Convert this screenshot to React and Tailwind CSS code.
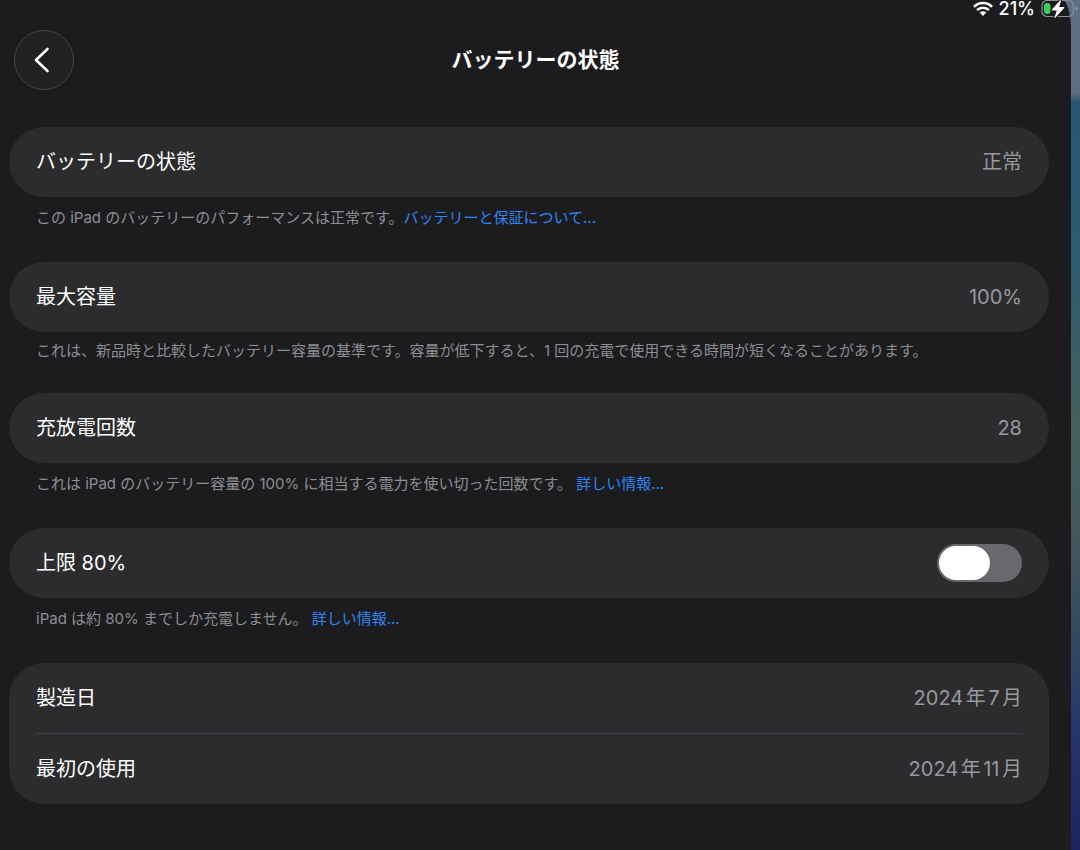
import React, { useState } from "react";

const WifiIcon = () => (
  <svg viewBox="0 0 20 16" className="h-4 w-5" aria-hidden="true">
    <g fill="none" stroke="white" strokeWidth="2.6">
      <path d="M1 5.8a12.6 12.6 0 0 1 18 0" />
      <path d="M4.1 9.2a8.2 8.2 0 0 1 11.800 0" />
    </g>
    <path d="M6.8 11.6a4.5 4.5 0 0 1 6.400 0L10 15z" fill="white" />
  </svg>
);

const BatteryIcon = () => (
  <svg viewBox="0 0 38 20" className="h-5 w-[38px]" aria-hidden="true">
    <rect x="1" y="1.5" width="31.5" height="16" rx="5" fill="none" stroke="#8b9097" strokeWidth="1.2" />
    <path d="M34.5 7v5c1.4-.4 2.2-1.3 2.2-2.5S35.900 7.400 34.500 7z" fill="#8b9097" />
    <rect x="3" y="4" width="6.500" height="11" rx="3" fill="#35d058" />
    <path
      d="M19.500 1.500L11 11h5.500l-2.500 7.500L23 8.500h-5.500z"
      fill="white"
      stroke="#1c1c1e"
      strokeWidth="3"
      strokeLinejoin="round"
      paintOrder="stroke"
    />
    <path
      d="M19.500 1.500L11 11h5.500l-2.500 7.500L23 8.500h-5.500z"
      fill="white"
      stroke="white"
      strokeWidth="1"
      strokeLinejoin="round"
    />
  </svg>
);

const Card = ({ children }) => (
  <div className="rounded-[35px] bg-[#2c2c2e] px-[27px]">{children}</div>
);

const Row = ({ label, value }) => (
  <div className="flex h-[70px] items-center justify-between text-xl">
    <span>{label}</span>
    <span className="text-[#98989f]">{value}</span>
  </div>
);

const Note = ({ children, link }) => (
  <p className="px-[27px] pt-[9px] pb-8 text-[15px] leading-6 text-[#8d8d93]">
    {children}
    {link && (
      <a href="#" className="text-[#2b86f5]">
        {link}
      </a>
    )}
  </p>
);

export default function App() {
  const [limit, setLimit] = useState(false);

  return (
    <div className="min-h-screen bg-[linear-gradient(to_bottom,#5d6d82_0%,#5d6d82_11%,#2a5673_12%,#2f5a70_30%,#44605c_50%,#43585c_63%,#33495f_75%,#28386a_85%,#1b2460_100%)] pr-[9px] font-['Inter','Noto_Sans_CJK_JP',sans-serif] text-white [text-autospace:normal]">
      <div lang="ja" className="min-h-screen rounded-tr-[9px_30px] bg-[#1c1c1e] pb-6">
        <div className="-mr-2 flex h-[18px] items-center justify-end gap-1.5">
          <WifiIcon />
          <span className="text-lg leading-4 font-medium">21%</span>
          <BatteryIcon />
        </div>

        <header className="grid grid-cols-[60px_1fr_60px] items-center px-3.5 pt-3">
          <button
            type="button"
            aria-label="戻る"
            className="flex size-[60px] items-center justify-center rounded-full border border-[#48484b] bg-[#222225]"
          >
            <svg viewBox="0 0 60 60" className="size-[60px] shrink-0" aria-hidden="true">
              <path
                d="M33.500 19L22 30l11.500 11"
                fill="none"
                stroke="white"
                strokeWidth="2.600"
                strokeLinecap="round"
                strokeLinejoin="round"
              />
            </svg>
          </button>
          <h1 className="text-center text-[21px] font-bold">バッテリーの状態</h1>
        </header>

        <main className="mt-[37px] pr-[22px] pl-[9px]">
          <Card>
            <Row label="バッテリーの状態" value="正常" />
          </Card>
          <Note link="バッテリーと保証について...">
            この iPad のバッテリーのパフォーマンスは正常です。
          </Note>

          <Card>
            <Row label="最大容量" value="100%" />
          </Card>
          <p className="px-[27px] pt-[7px] pb-[30px] text-[15px] leading-6 text-[#8d8d93]">
            これは、新品時と比較したバッテリー容量の基準です。容量が低下すると、1 回の充電で使用できる時間が短くなることがあります。
          </p>

          <Card>
            <Row label="充放電回数" value="28" />
          </Card>
          <Note link="詳しい情報...">
            これは iPad のバッテリー容量の 100% に相当する電力を使い切った回数です。{" "}
          </Note>

          <Card>
            <label className="flex h-[70px] items-center justify-between text-xl">
              <span>上限 80%</span>
              <input
                type="checkbox"
                role="switch"
                checked={limit}
                onChange={(e) => setLimit(e.target.checked)}
                className="flex h-[38px] w-[85px] appearance-none items-center rounded-full bg-[#68686d] px-0.5 before:h-[34px] before:w-[51px] before:rounded-full before:bg-white checked:justify-end checked:bg-[#35d058]"
              />
            </label>
          </Card>
          <Note link="詳しい情報...">
            iPad は約 80% までしか充電しません。{" "}
          </Note>

          <Card>
            <Row label="製造日" value="2024年7月" />
            <hr className="border-[#3f3f48]" />
            <Row label="最初の使用" value="2024年11月" />
          </Card>
        </main>
      </div>
    </div>
  );
}
